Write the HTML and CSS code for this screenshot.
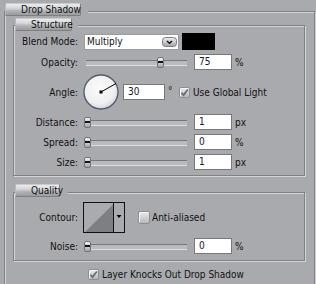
FILE: index.html
```html
<!DOCTYPE html>
<html>
<head>
<meta charset="utf-8">
<link rel="stylesheet" href="styles.css">
</head>
<body>
<div class="group outer">
  <div class="legend lg-drop"><span class="lbtn w-drop">Drop Shadow</span></div>

  <div class="group inner structure">
    <div class="legend lg-struct"><span class="lbtn w-struct">Structure</span></div>

    <div class="row blend">
      <span class="label">Blend Mode:</span>
      <div class="select">
        <span class="sel-text">Multiply</span>
        <svg class="dd" width="15" height="10" viewBox="0 0 15 10">
          <defs><linearGradient id="ddg" x1="0" y1="0" x2="0" y2="1"><stop offset="0" stop-color="#eeeeef"/><stop offset="1" stop-color="#a4a5a8"/></linearGradient></defs>
          <rect x="0.5" y="0.5" width="14" height="9" rx="3" fill="url(#ddg)" stroke="#7c7d81"/>
          <path d="M5 4 L7.5 6.3 L10 4" fill="none" stroke="#111" stroke-width="1.4"/>
        </svg>
      </div>
      <span class="swatch"></span>
    </div>

    <div class="row">
      <span class="label">Opacity:</span>
      <div class="slider"><span class="thumb" style="left:73px"></span></div>
      <span class="input">75</span><span class="unit">%</span>
    </div>

    <div class="row angle">
      <span class="label">Angle:</span>
      <svg class="dial" width="36" height="36" viewBox="0 0 36 36">
        <defs><radialGradient id="dg" cx="0.45" cy="0.4" r="0.6"><stop offset="0" stop-color="#fbfbfb"/><stop offset="0.75" stop-color="#efeff0"/><stop offset="1" stop-color="#d3d4d8"/></radialGradient></defs>
        <circle cx="18" cy="18" r="17" fill="url(#dg)" stroke="#4e5a6c" stroke-width="1.3"/>
        <line x1="18" y1="18" x2="33" y2="9.5" stroke="#000" stroke-width="1"/>
        <rect x="16.5" y="16.5" width="3" height="3" fill="#000"/>
      </svg>
      <span class="input in-angle">30</span>
      <span class="deg">°</span>
      <span class="cb checked">
        <svg width="9" height="9" viewBox="0 0 9 9"><path d="M1.5 4.8 L3.6 7 L7.8 1.5" fill="none" stroke="#6a6b6f" stroke-width="1.8"/></svg>
      </span>
      <span class="cb-text">Use Global Light</span>
    </div>

    <div class="row">
      <span class="label">Distance:</span>
      <div class="slider"><span class="thumb" style="left:0px"></span></div>
      <span class="input">1</span><span class="unit">px</span>
    </div>

    <div class="row">
      <span class="label">Spread:</span>
      <div class="slider"><span class="thumb" style="left:0px"></span></div>
      <span class="input">0</span><span class="unit">%</span>
    </div>

    <div class="row">
      <span class="label">Size:</span>
      <div class="slider"><span class="thumb" style="left:0px"></span></div>
      <span class="input">1</span><span class="unit">px</span>
    </div>
  </div>

  <div class="group inner quality">
    <div class="legend lg-qual"><span class="lbtn w-qual">Quality</span></div>

    <div class="row contour">
      <span class="label">Contour:</span>
      <svg class="contour-box" width="42" height="31" viewBox="0 0 42 31">
        <rect x="0.5" y="0.5" width="41" height="30" fill="#aaabaf" stroke="#111"/>
        <polygon points="2,30 30.5,2 30.5,30" fill="#7e7f83"/>
        <line x1="30.5" y1="0" x2="30.5" y2="31" stroke="#111"/>
        <polygon points="33.5,13 38.5,13 36,16" fill="#000"/>
      </svg>
      <span class="cb big"></span>
      <span class="cb-text aa">Anti-aliased</span>
    </div>

    <div class="row noise">
      <span class="label">Noise:</span>
      <div class="slider"><span class="thumb" style="left:0px"></span></div>
      <span class="input">0</span><span class="unit">%</span>
    </div>
  </div>

  <div class="knock">
    <span class="cb checked">
      <svg width="9" height="9" viewBox="0 0 9 9"><path d="M1.5 4.8 L3.6 7 L7.8 1.5" fill="none" stroke="#6a6b6f" stroke-width="1.8"/></svg>
    </span>
    <span class="cb-text">Layer Knocks Out Drop Shadow</span>
  </div>
</div>
</body>
</html>
```

FILE: styles.css
```css
* { box-sizing: border-box; }
html, body { margin: 0; padding: 0; }
body {
  width: 316px;
  height: 284px;
  overflow: hidden;
  background: #a9aaae;
  font-family: "DejaVu Sans Condensed", "DejaVu Sans", sans-serif;
  font-stretch: condensed;
  font-size: 10px;
  color: #111;
}

.group {
  border: 1px solid #808185;
  box-shadow: 1px 1px 0 #d3d4d7, inset 1px 1px 0 #d3d4d7;
}
.outer {
  margin: 11px 1px 0 4px;
  height: 273px;
  border-bottom-width: 0;
}
.inner {
  margin: 0 9px 0 8px;
}
.structure { margin-top: 9px; padding-bottom: 5px; }
.quality { margin-top: 16px; padding-bottom: 6px; }

.legend {
  display: flex;
  height: 13px;
  background: #a9aaae;
}
.lg-drop { width: 83px; margin-top: -9px; }
.lg-struct { width: 63px; margin-top: -8px; margin-left: 1px; }
.lg-qual { width: 53px; margin-top: -9px; margin-left: 1px; }

.lbtn {
  display: block;
  height: 13px;
  line-height: 12px;
  padding-left: 15px;
  white-space: nowrap;
  border: 1px solid #7d7e82;
  border-top-color: #c9cacd;
  border-left-color: #b9babd;
  border-radius: 2px;
  background: linear-gradient(#ececed 0%, #d3d4d6 40%, #b3b4b7 60%, #9a9b9e 100%);
}
.w-drop { width: 76px; }
.w-struct { width: 57px; }
.w-qual { width: 45px; }

.row {
  display: flex;
  align-items: center;
  height: 16px;
  margin-top: 4px;
  white-space: nowrap;
}
.label {
  flex: none;
  width: 64px;
  margin-right: 6px;
  text-align: right;
}
.blend { height: 17px; margin-top: 2px; }
.select {
  display: flex;
  align-items: center;
  justify-content: space-between;
  width: 95px;
  height: 16px;
  background: #fff;
  border: 1px solid #9a9ba0;
  padding: 0 1px 0 2px;
}
.swatch {
  width: 33px;
  height: 17px;
  margin-left: 3px;
  background: #000;
}

.slider {
  position: relative;
  flex: none;
  width: 104px;
  height: 16px;
}
.slider::before {
  content: "";
  position: absolute;
  left: 2px;
  right: 1px;
  top: 6px;
  height: 4px;
  border-top: 1px solid #76777b;
  border-bottom: 1px solid #dedfe1;
  background: #b9babd;
}
.thumb {
  position: absolute;
  top: 3px;
  width: 7px;
  height: 11px;
  border: 1px solid #727377;
  border-radius: 2px;
  background: linear-gradient(#f3f3f4 0%, #cfd0d2 38%, #111 38%, #111 60%, #c4c5c8 60%, #a2a3a6 100%);
}
.input {
  flex: none;
  width: 38px;
  height: 16px;
  margin-left: 6px;
  padding-left: 4px;
  line-height: 14px;
  background: #fff;
  border: 1px solid #77787c;
  color: #14182a;
}
.unit { margin-left: 3px; }

.angle { height: 36px; }
.dial { flex: none; margin-left: -1px; }
.in-angle { width: 42px; margin-left: 4px; }
.deg {
  align-self: flex-start;
  width: 14px;
  margin-top: 12px;
  padding-left: 3px;
  line-height: 10px;
}

.cb {
  display: flex;
  align-items: center;
  justify-content: center;
  flex: none;
  width: 11px;
  height: 11px;
  border: 1px solid #8e8f93;
  border-radius: 2px;
  background: linear-gradient(#ebebec, #b6b7ba);
  box-shadow: inset 1px 1px 0 #f6f6f7;
}
.cb.big {
  width: 12px;
  height: 13px;
  margin-left: 13px;
}
.cb-text { margin-left: 3px; }
.cb-text.aa { margin-left: 2px; }

.contour { height: 31px; margin-top: 5px; }
.contour-box { flex: none; margin-left: -1px; }
.noise { margin-top: 5px; }

.knock {
  display: flex;
  align-items: center;
  height: 11px;
  margin: 8px 0 0 83px;
  white-space: nowrap;
}
```
